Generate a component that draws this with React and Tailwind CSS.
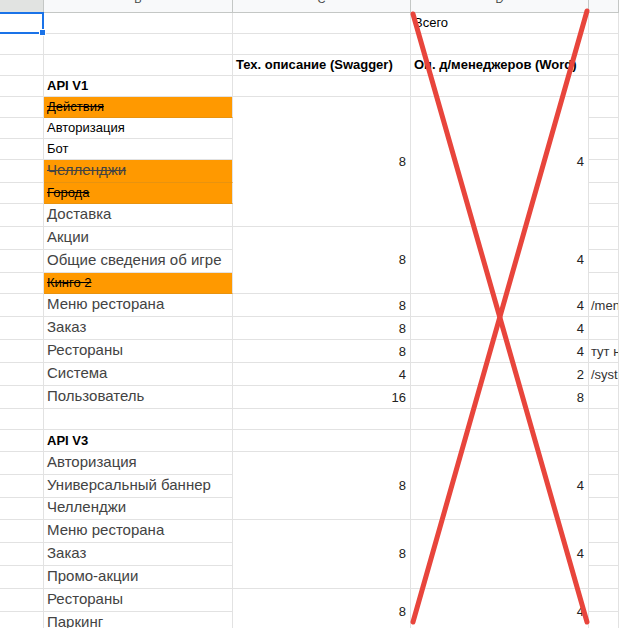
import clsx from 'clsx'

// sheet rows, top to bottom. cd: undefined = empty C/D, 'skip' = covered by a merge above
const rows = [
  { h: 'h-[21px]', d: 'Всего' },
  { h: 'h-[21px]' },
  { h: 'h-[21px]', head: ['Тех. описание (Swagger)', 'Оп. д/менеджеров (Word)'] },
  { h: 'h-[21px]', b: 'API V1', k: 'bold' },
  { h: 'h-[21px]', b: 'Действия', k: 'small', o: true, cd: { span: 'row-span-6', c: '8', d: '4' } },
  { h: 'h-[21px]', b: 'Авторизация', k: 'small', cd: 'skip' },
  { h: 'h-[21px]', b: 'Бот', k: 'small', cd: 'skip' },
  { h: 'h-[23px]', b: 'Челленджи', k: 'big', o: true, cd: 'skip' },
  { h: 'h-[21px]', b: 'Города', k: 'small', o: true, cd: 'skip' },
  { h: 'h-[23px]', b: 'Доставка', k: 'big', cd: 'skip' },
  { h: 'h-[23px]', b: 'Акции', k: 'big', cd: { span: 'row-span-3', c: '8', d: '4' } },
  { h: 'h-[23px]', b: 'Общие сведения об игре', k: 'big', cd: 'skip' },
  { h: 'h-[21px]', b: 'Кинго 2', k: 'small', o: true, cd: 'skip' },
  { h: 'h-[23px]', b: 'Меню ресторана', k: 'big', cd: { c: '8', d: '4' }, e: '/menu/restaurant' },
  { h: 'h-[23px]', b: 'Заказ', k: 'big', cd: { c: '8', d: '4' } },
  { h: 'h-[23px]', b: 'Рестораны', k: 'big', cd: { c: '8', d: '4' }, e: 'тут нет описания' },
  { h: 'h-[23px]', b: 'Система', k: 'big', cd: { c: '4', d: '2' }, e: '/system' },
  { h: 'h-[23px]', b: 'Пользователь', k: 'big', cd: { c: '16', d: '8' } },
  { h: 'h-[21px]' },
  { h: 'h-[22px]', b: 'API V3', k: 'bold' },
  { h: 'h-[23px]', b: 'Авторизация', k: 'big', cd: { span: 'row-span-3', c: '8', d: '4' } },
  { h: 'h-[23px]', b: 'Универсальный баннер', k: 'big', cd: 'skip' },
  { h: 'h-[22px]', b: 'Челленджи', k: 'big', cd: 'skip' },
  { h: 'h-[23px]', b: 'Меню ресторана', k: 'big', cd: { span: 'row-span-3', c: '8', d: '4' } },
  { h: 'h-[23px]', b: 'Заказ', k: 'big', cd: 'skip' },
  { h: 'h-[23px]', b: 'Промо-акции', k: 'big', cd: 'skip' },
  { h: 'h-[23px]', b: 'Рестораны', k: 'big', cd: { span: 'row-span-2', c: '8', d: '4' } },
  { h: 'h-[23px]', b: 'Паркинг', k: 'big', cd: 'skip' },
]

const kinds = {
  bold: 'text-[13px] leading-[16px] font-bold text-black pb-[2px]',
  small: 'text-[13px] leading-[16px] text-black pb-[2px]',
  big: 'text-[15px] leading-[18px] text-[#434343] pb-[3px]',
}

function Cell({ className, children }) {
  return (
    <div
      className={clsx(
        'flex min-h-0 overflow-hidden whitespace-nowrap border-r border-b border-[#e2e2e2] text-[13px] leading-[16px]',
        className,
      )}
    >
      {children}
    </div>
  )
}

function HeadCell({ className, children }) {
  return (
    <div
      className={clsx(
        'flex h-[13px] justify-center overflow-hidden border-r border-b border-[#c4c7c5] text-[11px] leading-[14px] text-[#444746]',
        className,
      )}
    >
      <span className="-mt-[8px]">{children}</span>
    </div>
  )
}

export default function App() {
  return (
    <div className="relative h-[628px] w-[619px] overflow-hidden bg-white font-['Liberation_Sans',Arial,sans-serif]">
      <div className="grid grid-cols-[44px_189px_178px_178px_1fr]">
        <HeadCell className="bg-[#e1e3e1]" />
        <HeadCell className="bg-[#f8f9fa]">B</HeadCell>
        <HeadCell className="bg-[#f8f9fa]">C</HeadCell>
        <HeadCell className="bg-[#f8f9fa]">D</HeadCell>
        <HeadCell className="bg-[#f8f9fa]" />

        {rows.map((r, i) => (
          <div key={i} className="contents">
            <Cell className={r.h} />
            <Cell
              className={clsx(
                'items-end pl-[3px]',
                r.k && kinds[r.k],
                r.o && 'bg-[#ff9900] border-b-[#e8930f] line-through',
              )}
            >
              {r.b}
            </Cell>
            {r.head ? (
              <>
                <Cell className="items-end pl-[3px] pb-[2px] font-bold text-black">{r.head[0]}</Cell>
                <Cell className="items-end pl-[3px] pb-[2px] font-bold text-black">{r.head[1]}</Cell>
              </>
            ) : r.cd === 'skip' ? null : r.cd ? (
              <>
                <Cell
                  className={clsx(
                    'justify-end pr-[4px] text-[#222]',
                    r.cd.span ? clsx(r.cd.span, 'items-center') : 'items-end pb-[2px]',
                  )}
                >
                  {r.cd.c}
                </Cell>
                <Cell
                  className={clsx(
                    'justify-end pr-[4px] text-[#222]',
                    r.cd.span ? clsx(r.cd.span, 'items-center') : 'items-end pb-[2px]',
                  )}
                >
                  {r.cd.d}
                </Cell>
              </>
            ) : (
              <>
                <Cell />
                <Cell className="items-end pl-[3px] pb-[2px] text-black">{r.d}</Cell>
              </>
            )}
            <Cell className="items-end pl-[2px] pb-[2px] text-[#333]">{r.e}</Cell>
          </div>
        ))}
      </div>

      {/* active cell A1 */}
      <div className="pointer-events-none absolute left-[-2px] top-[12px] h-[22px] w-[46px] border-2 border-[#1a73e8]" />
      <div className="pointer-events-none absolute left-[39px] top-[29px] h-[7px] w-[7px] border border-white bg-[#1a73e8]" />

      {/* the big red cross drawn over column D */}
      <svg className="pointer-events-none absolute inset-0 h-full w-full" viewBox="0 0 619 628">
        <line x1="413" y1="14" x2="587" y2="622" stroke="#e8453c" strokeWidth="5" strokeLinecap="round" />
        <line x1="587" y1="11" x2="413" y2="622" stroke="#e8453c" strokeWidth="5" strokeLinecap="round" />
      </svg>
    </div>
  )
}
